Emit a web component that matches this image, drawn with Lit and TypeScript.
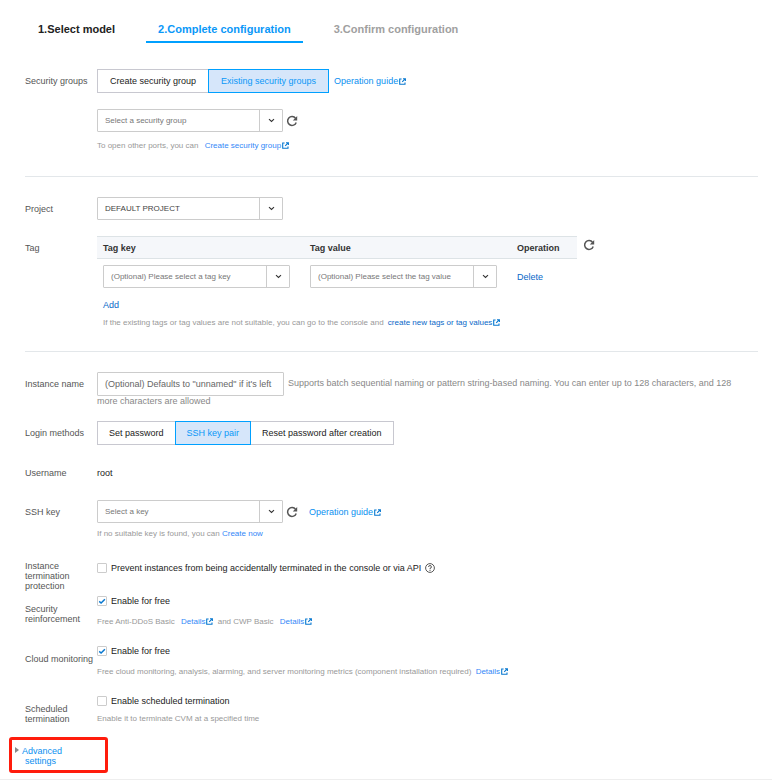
import { LitElement, html, css, svg } from "lit";
import { customElement, property } from "lit/decorators.js";

const external = html`<svg class="ext" viewBox="0 0 7 7" aria-hidden="true">
  ${svg`<path d="M2.6 1H.7V6.3H6V4.6M4 .7H6.4V3M6.2.9 3.2 3.9" fill="none" stroke="currentColor" stroke-width="1.1"/>`}
</svg>`;

const refresh = html`<svg class="refresh-icon" viewBox="0 0 12 12" aria-hidden="true">
  ${svg`<path d="M9.6 3.4A4.4 4.4 0 1 0 10.2 7.4" fill="none" stroke="currentColor" stroke-width="1.5"/><path d="M11.2 1V5.4H6.8z" fill="currentColor"/>`}
</svg>`;

const base = css`
  * { box-sizing: border-box; }
  a { color: #0a8ff0; text-decoration: none; }
  button, input, select { font: inherit; margin: 0; }
`;

@customElement("drop-down")
class DropDown extends LitElement {
  @property() label = "";
  @property() value = "";
  @property({ type: Boolean }) filled = false;

  static styles = [
    base,
    css`
      :host { display: block; position: relative; height: 23px; }
      select {
        appearance: none;
        display: block;
        width: 100%;
        height: 100%;
        padding: 0 28px 0 7px;
        border: 1px solid #ccc;
        border-radius: 1px;
        background: #fff;
        color: #777;
        font-size: 8px;
      }
      select.filled { color: #444; }
      .arrow {
        position: absolute;
        inset: 1px 1px 1px auto;
        width: 23px;
        border-left: 1px solid #ccc;
        display: grid;
        place-items: center;
        pointer-events: none;
      }
      svg { width: 7px; height: 5px; }
    `,
  ];

  render() {
    return html`<select class=${this.filled ? "filled" : ""} aria-label=${this.label}>
        <option>${this.value}</option>
      </select>
      <span class="arrow"
        ><svg viewBox="0 0 7 5" aria-hidden="true">
          <path d="M1 1.2 3.5 3.5 6 1.2" fill="none" stroke="#333" stroke-width="1.1" /></svg
      ></span>`;
  }
}

@customElement("app-root")
class AppRoot extends LitElement {
  static styles = [
    base,
    css`
      :host {
        display: block;
        background: #fff;
        color: #222;
        font: 9px/14px "Liberation Sans", Arial, sans-serif;
      }
      .tabs { display: flex; gap: 19px; padding: 15px 26px 0; }
      .tab {
        padding: 7px 12px 5px;
        border-bottom: 2px solid transparent;
        font-size: 11px;
        font-weight: bold;
        color: #222;
      }
      .tab.active { color: #0a98f8; border-color: #00a0ff; }
      .tab.later { color: #a0a0a0; }

      form { margin: 0; }
      section { margin: 0 14px 0 25px; padding: 20px 0 21px; border-bottom: 1px solid #e3e7ea; }
      section:first-child { padding: 26px 0 23px; }
      section:last-of-type { border: 0; padding-bottom: 0; }
      .row { display: grid; grid-template-columns: 72px minmax(0, 1fr); }
      .gap-xs { margin-top: 3px; }
      .gap-s { margin-top: 15px; }
      .gap { margin-top: 16px; }
      .gap-l { margin-top: 20px; }
      .gap-xl { margin-top: 21px; }
      .label { color: #555; padding-top: 5px; }
      .label.flat { padding-top: 0; }
      .label.multi { line-height: 10px; padding-top: 10px; }
      .label.top { padding-top: 0; }
      .line { display: flex; align-items: center; }
      .pick { width: 186px; }
      .after { margin-left: 5px; }
      .guide { margin-left: 11px; }

      .group { display: flex; }
      .group button {
        height: 24px;
        padding: 0 11px;
        border: 1px solid #c8c8d0;
        background: #fff;
        color: #222;
      }
      .group.wide button { padding: 0 12px; }
      .group button + button { border-left-width: 0; }
      .group button.on { background: #d6e6fa; border: 1px solid #00a0ff; color: #0a98f8; margin-left: -1px; }

      .help { font-size: 8px; line-height: 14px; color: #999; }
      .help a { color: #3388f8; }
      .below { margin-top: 7px; }
      .near { margin-top: 4px; }
      .sp { margin-left: 4px; }
      .sp-s { margin-left: 2px; }
      .ext { width: 7px; height: 7px; color: #0878d0; margin-left: 1px; vertical-align: -1px; }
      .refresh {
        display: grid;
        place-items: center;
        width: 12px;
        height: 12px;
        padding: 0;
        margin-left: 3px;
        border: 0;
        background: none;
        color: #555;
      }
      .refresh-icon { width: 12px; height: 12px; }

      .tag-area { display: flex; align-items: flex-start; }
      .tags { width: 480px; border-collapse: collapse; table-layout: fixed; }
      .tags th {
        height: 22px;
        padding: 0 6px;
        border: 1px solid #dde3e6;
        border-width: 1px 0;
        background: #f5f7fa;
        color: #333;
        text-align: left;
      }
      .tags td { padding: 6px 14px 0 6px; }
      .tags .c1 { width: 207px; }
      .tags .c3 { width: 66px; }
      .tags td.op { padding-right: 0; }
      .tag-area .refresh { margin: 3px 0 0 6px; }
      .under { padding-left: 6px; }
      .add { margin-top: 10px; }
      .strong, .help a.strong { color: #0868c8; }

      .note { line-height: 10px; color: #888; padding-right: 10px; }
      .name {
        width: 187px;
        height: 24px;
        padding: 0 7px;
        border: 1px solid #ccc;
        border-radius: 1px;
        vertical-align: middle;
        margin-right: 4px;
      }
      .name::placeholder { color: #666; }

      .check { display: flex; align-items: center; align-self: start; gap: 4px; }
      .check input {
        appearance: none;
        width: 10px;
        height: 10px;
        border: 1px solid #ccc;
        border-radius: 1px;
        background: #fff;
      }
      .check input:checked {
        background: url("data:image/svg+xml,%3Csvg xmlns='http://www.w3.org/2000/svg' viewBox='0 0 8 8'%3E%3Cpath d='M1.2 4.4 3.1 6 6.9 2.2' fill='none' stroke='%230878d0' stroke-width='1.5'/%3E%3C/svg%3E") center / 8px 8px no-repeat;
      }
      .q { width: 10px; height: 10px; }

      .advanced {
        display: flex;
        align-items: flex-start;
        width: 99px;
        margin: 11px 0 6px 9px;
        padding: 6px 3px 4px;
        border: 3px solid #ff1c0c;
        border-radius: 3px;
        background: none;
        color: #0a8ff0;
        text-align: left;
        line-height: 10px;
      }
      .advanced svg { width: 4px; height: 6px; margin: 1px 3px 0 0; }
      .advanced span { padding-left: 3px; text-indent: -3px; }
      .advanced .second { display: block; padding: 0; text-indent: 0; }
      footer { height: 1px; background: #eee; }
    `,
  ];

  render() {
    return html`
      <nav class="tabs">
        <a class="tab" href="#model">1.Select model</a>
        <a class="tab active" href="#complete">2.Complete configuration</a>
        <a class="tab later" href="#confirm">3.Confirm configuration</a>
      </nav>
      <form>
        <section>
          <div class="row">
            <span class="label">Security groups</span>
            <div class="line">
              <div class="group wide">
                <button type="button">Create security group</button>
                <button type="button" class="on">Existing security groups</button>
              </div>
              <a class="after" href="#guide">Operation guide${external}</a>
            </div>
          </div>
          <div class="row gap">
            <span></span>
            <div>
              <div class="line">
                <drop-down class="pick" label="Security group" value="Select a security group"></drop-down>
                <button type="button" class="refresh" aria-label="Refresh">${refresh}</button>
              </div>
              <div class="help below">
                To open other ports, you can <a class="sp" href="#create">Create security group${external}</a>
              </div>
            </div>
          </div>
        </section>

        <section>
          <div class="row">
            <span class="label">Project</span>
            <drop-down class="pick" label="Project" value="DEFAULT PROJECT" filled></drop-down>
          </div>
          <div class="row gap">
            <span class="label">Tag</span>
            <div>
              <div class="tag-area">
                <table class="tags">
                  <thead>
                    <tr>
                      <th class="c1">Tag key</th>
                      <th>Tag value</th>
                      <th class="c3">Operation</th>
                    </tr>
                  </thead>
                  <tbody>
                    <tr>
                      <td><drop-down label="Tag key" value="(Optional) Please select a tag key"></drop-down></td>
                      <td><drop-down label="Tag value" value="(Optional) Please select the tag value"></drop-down></td>
                      <td class="op"><a class="strong" href="#delete">Delete</a></td>
                    </tr>
                  </tbody>
                </table>
                <button type="button" class="refresh" aria-label="Refresh tags">${refresh}</button>
              </div>
              <div class="under add"><a class="strong" href="#add">Add</a></div>
              <div class="under help near">
                If the existing tags or tag values are not suitable, you can go to the console and
                <a class="strong sp-s" href="#tags">create new tags or tag values${external}</a>
              </div>
            </div>
          </div>
        </section>

        <section>
          <div class="row">
            <label class="label" for="name">Instance name</label>
            <div class="note">
              <input id="name" class="name" type="text" placeholder=${`(Optional) Defaults to "unnamed" if it's left`} />Supports batch sequential naming or pattern string-based naming. You can enter up to 128 characters, and 128 more characters are allowed
            </div>
          </div>
          <div class="row gap-s">
            <span class="label">Login methods</span>
            <div class="group">
              <button type="button">Set password</button>
              <button type="button" class="on">SSH key pair</button>
              <button type="button">Reset password after creation</button>
            </div>
          </div>
          <div class="row gap-xl">
            <span class="label flat">Username</span>
            <span>root</span>
          </div>
          <div class="row gap-l">
            <span class="label">SSH key</span>
            <div>
              <div class="line">
                <drop-down class="pick" label="SSH key" value="Select a key"></drop-down>
                <button type="button" class="refresh" aria-label="Refresh keys">${refresh}</button>
                <a class="guide" href="#key-guide">Operation guide${external}</a>
              </div>
              <div class="help near">If no suitable key is found, you can <a href="#new-key">Create now</a></div>
            </div>
          </div>
          <div class="row gap-l">
            <span class="label multi top">Instance<br />termination<br />protection</span>
            <label class="check">
              <input type="checkbox" />Prevent instances from being accidentally terminated in the console or via API
              <svg class="q" viewBox="0 0 10 10" aria-hidden="true">
                <circle cx="5" cy="5" r="4.4" fill="none" stroke="#444" stroke-width=".9" />
                <path d="M3.6 4A1.4 1.4 0 1 1 5 5.3V6.3M5 7v1" fill="none" stroke="#444" stroke-width=".9" />
              </svg>
            </label>
          </div>
          <div class="row gap-xs">
            <span class="label multi">Security reinforcement</span>
            <div>
              <label class="check"><input type="checkbox" checked />Enable for free</label>
              <div class="help below">
                Free Anti-DDoS Basic <a class="sp" href="#ddos">Details${external}</a>
                <span class="sp-s">and CWP Basic</span> <a class="sp" href="#cwp">Details${external}</a>
              </div>
            </div>
          </div>
          <div class="row gap-s">
            <span class="label multi">Cloud monitoring</span>
            <div>
              <label class="check"><input type="checkbox" checked />Enable for free</label>
              <div class="help below">
                Free cloud monitoring, analysis, alarming, and server monitoring metrics (component installation required)
                <a class="sp-s" href="#monitor">Details${external}</a>
              </div>
            </div>
          </div>
          <div class="row gap-s">
            <span class="label multi">Scheduled termination</span>
            <div>
              <label class="check"><input type="checkbox" />Enable scheduled termination</label>
              <div class="help near">Enable it to terminate CVM at a specified time</div>
            </div>
          </div>
        </section>
        <button type="button" class="advanced">
          <svg viewBox="0 0 4 6" aria-hidden="true"><path d="M0 0 4 3 0 6z" fill="#888" /></svg>
          <span>Advanced<span class="second">settings</span></span>
        </button>
      </form>
      <footer></footer>
    `;
  }
}
